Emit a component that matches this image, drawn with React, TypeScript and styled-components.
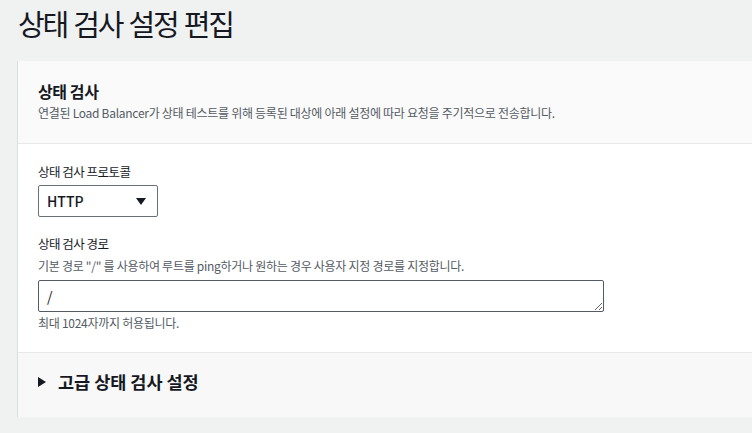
import styled, { createGlobalStyle } from 'styled-components';

const GlobalStyle = createGlobalStyle`
  html, body {
    margin: 0;
    padding: 0;
    background: #f0f1f1;
    overflow: hidden;
  }
  body {
    font-family: "Noto Sans CJK KR", "Noto Sans", sans-serif;
    color: #16191f;
  }
`;

const Page = styled.div`
  padding: 3px 0 0 17px;
  width: 1000px;
`;

const PageTitle = styled.h1`
  margin: 0 0 18px 1px;
  font-size: 29px;
  line-height: 40px;
  font-weight: 400;
  letter-spacing: -2.2px;
  word-spacing: 2px;
  color: #16191f;
`;

const Card = styled.section`
  background: #fff;
  border-left: 1px solid #dcdfe0;
  box-shadow: 0 2px 0 0 #9aa3a5;
`;

const CardHeader = styled.header`
  background: #fafafa;
  border-bottom: 1px solid #e7e9e9;
  padding: 19px 20px 22px;
`;

const CardTitle = styled.h2`
  margin: 0;
  font-size: 16px;
  line-height: 22px;
  font-weight: 700;
  letter-spacing: -0.4px;
`;

const Hint = styled.p<{ $gap?: number }>`
  margin: ${p => p.$gap ?? 0}px 0 0;
  font-size: 12px;
  line-height: 16px;
  letter-spacing: -0.28px;
  color: #545b64;
`;

const CardBody = styled.div`
  padding: 17px 20px 21px;
  display: flex;
  flex-direction: column;
  gap: 16px;
  border-bottom: 1px solid #e7e9e9;
`;

const Field = styled.div`
  display: flex;
  flex-direction: column;
`;

const Label = styled.label`
  font-size: 12.5px;
  line-height: 22px;
  letter-spacing: -0.5px;
  color: #16191f;
`;

const SelectBox = styled.div`
  margin-top: 2px;
  width: 120px;
  height: 32px;
  box-sizing: border-box;
  border: 1px solid #687078;
  border-radius: 2px;
  background: #fff;
  display: flex;
  align-items: center;
  justify-content: space-between;
  padding: 0 11px 0 8px;
  font-size: 14px;
  font-weight: 500;
`;

const Caret = styled.span`
  width: 0;
  height: 0;
  border-left: 5px solid transparent;
  border-right: 5px solid transparent;
  border-top: 7px solid #16191f;
`;

const PathInput = styled.textarea`
  margin-top: 6px;
  width: 566px;
  height: 32px;
  box-sizing: border-box;
  border: 1px solid #545b64;
  border-radius: 2px;
  padding: 5px 8px;
  font-family: "Noto Sans CJK KR", "Noto Sans", sans-serif;
  font-size: 14px;
  line-height: 20px;
  color: #16191f;
  resize: both;
  outline: none;
`;

const Footer = styled.div`
  background: #f8f8f8;
  padding: 17px 20px 23px;
`;

const Expander = styled.div`
  display: flex;
  align-items: center;
  gap: 12px;
  font-size: 17.5px;
  line-height: 24px;
  font-weight: 700;
`;

const ExpandArrow = styled.span`
  width: 0;
  height: 0;
  border-top: 5px solid transparent;
  border-bottom: 5px solid transparent;
  border-left: 8px solid #16191f;
`;

export default function App() {
  return (
    <>
      <GlobalStyle />
      <Page>
        <PageTitle>상태 검사 설정 편집</PageTitle>
        <Card>
          <CardHeader>
            <CardTitle>상태 검사</CardTitle>
            <Hint $gap={3}>
              연결된 Load Balancer가 상태 테스트를 위해 등록된 대상에 아래 설정에 따라 요청을 주기적으로 전송합니다.
            </Hint>
          </CardHeader>
          <CardBody>
            <Field>
              <Label>상태 검사 프로토콜</Label>
              <SelectBox>
                HTTP
                <Caret />
              </SelectBox>
            </Field>
            <Field>
              <Label>상태 검사 경로</Label>
              <Hint $gap={3}>기본 경로 "/" 를 사용하여 루트를 ping하거나 원하는 경우 사용자 지정 경로를 지정합니다.</Hint>
              <PathInput defaultValue="/" />
              <Hint $gap={3}>최대 1024자까지 허용됩니다.</Hint>
            </Field>
          </CardBody>
          <Footer>
            <Expander>
              <ExpandArrow />
              고급 상태 검사 설정
            </Expander>
          </Footer>
        </Card>
      </Page>
    </>
  );
}
